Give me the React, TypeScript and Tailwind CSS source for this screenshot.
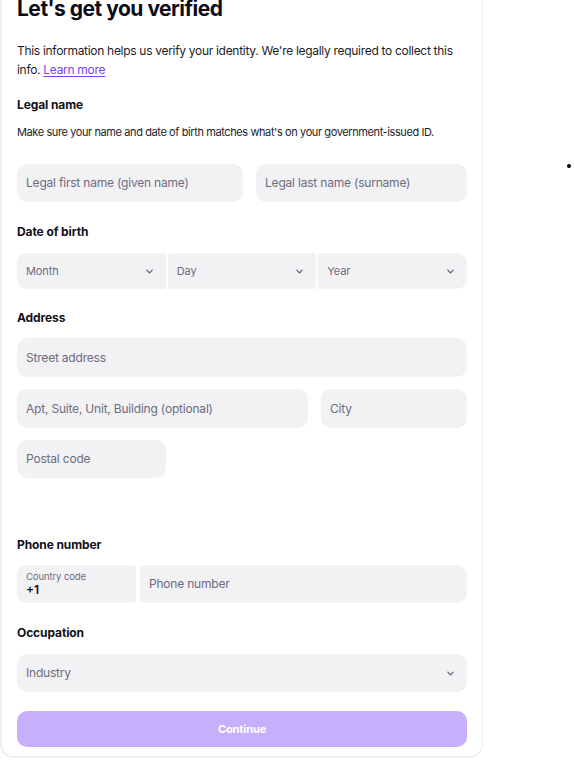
import { ChevronDown } from "lucide-react";

const font = { fontFamily: "Inter, 'Noto Sans', sans-serif" };

function Field({
  placeholder,
  className = "",
}: {
  placeholder: string;
  className?: string;
}) {
  return (
    <div
      className={`flex h-[38px] items-center rounded-[10px] bg-[#f2f2f5] px-[9px] text-[12px] tracking-[-0.2px] text-[#6c6c80] ${className}`}
    >
      {placeholder}
    </div>
  );
}

function SelectBox({
  label,
  className = "",
}: {
  label: string;
  className?: string;
}) {
  return (
    <div
      className={`flex h-[36px] flex-1 items-center justify-between bg-[#f2f2f5] pl-[9px] pr-[11px] text-[11px] tracking-[-0.1px] text-[#6c6c80] ${className}`}
    >
      <span>{label}</span>
      <ChevronDown className="h-[11px] w-[11px] text-[#55556a]" strokeWidth={2.2} />
    </div>
  );
}

function Label({ children, className = "" }: { children: string; className?: string }) {
  return (
    <div
      className={`text-[12px] font-bold leading-[18px] tracking-[-0.1px] text-[#101018] ${className}`}
    >
      {children}
    </div>
  );
}

export default function App() {
  return (
    <div className="relative h-[760px] w-[574px] overflow-hidden bg-white" style={font}>
      <div className="flex h-[758px] w-[483px] flex-col rounded-b-[14px] border-b-2 border-l-2 border-r border-[#eeeef3] bg-white pl-[15px] pr-[15px]">
        <h1 className="-mt-[5px] text-[21px] font-bold leading-[28px] tracking-[-0.5px] text-[#0d0d1a]">
          Let's get you verified
        </h1>

        <p className="mt-[18px] text-[12px] leading-[19px] tracking-[-0.3px] text-[#1d1d28]">
          This information helps us verify your identity. We're legally required to collect this
          info.{" "}
          <a href="#" className="text-[#7b3ff2] underline underline-offset-2">
            Learn more
          </a>
        </p>

        <Label className="mt-[17px]">Legal name</Label>
        <p className="mt-[10px] text-[11px] leading-[16px] tracking-[-0.4px] text-[#1d1d28]">
          Make sure your name and date of birth matches what's on your government-issued ID.
        </p>

        <div className="mt-[24px] flex gap-[13px]">
          <Field placeholder="Legal first name (given name)" className="w-[226px]" />
          <Field placeholder="Legal last name (surname)" className="flex-1" />
        </div>

        <Label className="mt-[21px]">Date of birth</Label>
        <div className="mt-[12px] flex gap-[2px]">
          <SelectBox label="Month" className="rounded-l-[10px] rounded-r-[3px]" />
          <SelectBox label="Day" className="rounded-[3px]" />
          <SelectBox label="Year" className="rounded-l-[3px] rounded-r-[10px]" />
        </div>

        <Label className="mt-[20px]">Address</Label>
        <Field placeholder="Street address" className="mt-[11px] h-[39px]" />
        <div className="mt-[12px] flex gap-[13px]">
          <Field placeholder="Apt, Suite, Unit, Building (optional)" className="h-[39px] w-[291px]" />
          <Field placeholder="City" className="h-[39px] flex-1" />
        </div>
        <Field placeholder="Postal code" className="mt-[12px] w-[149px]" />

        <Label className="mt-[58px]">Phone number</Label>
        <div className="mt-[11px] flex gap-[4px]">
          <div className="flex h-[38px] w-[119px] flex-col justify-center rounded-l-[10px] rounded-r-[3px] bg-[#f2f2f5] px-[9px]">
            <span className="text-[9.5px] leading-[12px] tracking-[-0.1px] text-[#6c6c80]">
              Country code
            </span>
            <span className="text-[12px] font-semibold leading-[14px] text-[#101018]">+1</span>
          </div>
          <div className="flex h-[38px] flex-1 items-center rounded-l-[3px] rounded-r-[10px] bg-[#f2f2f5] px-[9px] text-[12px] tracking-[-0.2px] text-[#6c6c80]">
            Phone number
          </div>
        </div>

        <Label className="mt-[21px]">Occupation</Label>
        <div className="mt-[12px] flex h-[38px] items-center justify-between rounded-[10px] bg-[#f2f2f5] pl-[9px] pr-[11px] text-[12px] tracking-[-0.2px] text-[#6c6c80]">
          <span>Industry</span>
          <ChevronDown className="h-[11px] w-[11px] text-[#55556a]" strokeWidth={2.2} />
        </div>

        <button className="mt-[19px] flex h-[36px] w-full items-center justify-center rounded-[10px] bg-[#c8affb] text-[11px] font-bold tracking-[-0.1px] text-white">
          Continue
        </button>
      </div>

      <span className="absolute left-[567px] top-[164px] h-[4px] w-[4px] rounded-full bg-black" />
    </div>
  );
}
